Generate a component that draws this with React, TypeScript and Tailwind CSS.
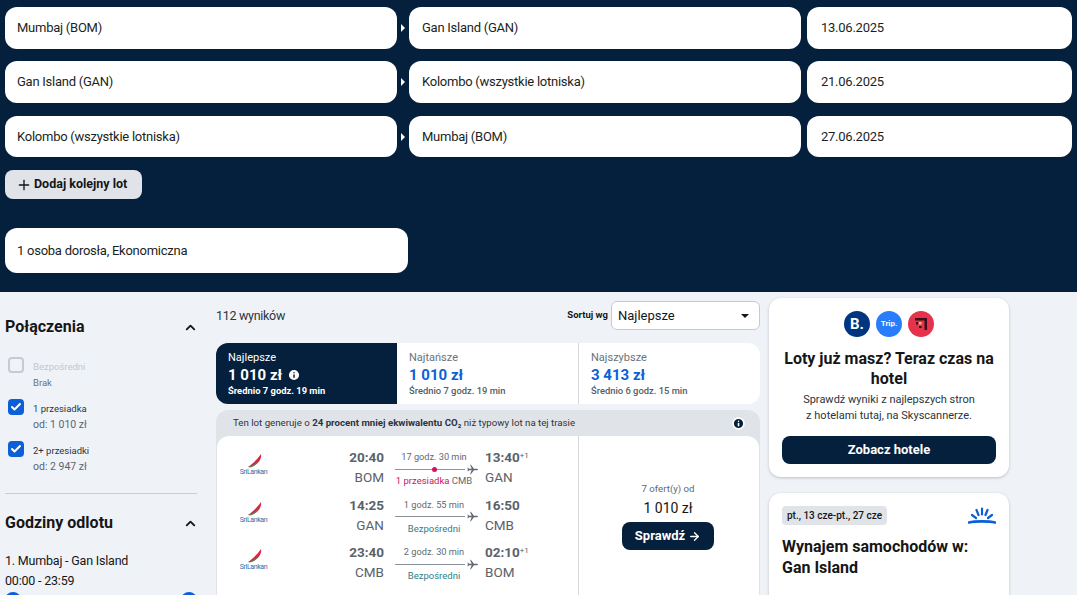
import { ChevronUp, Check, Plus, ArrowRight, Info } from "lucide-react";

const FONT = "font-['Roboto','Liberation_Sans',sans-serif]";

const legs = [
  { from: "Mumbaj (BOM)", to: "Gan Island (GAN)", date: "13.06.2025", h: "h-[42px]", mb: "mb-3" },
  { from: "Gan Island (GAN)", to: "Kolombo (wszystkie lotniska)", date: "21.06.2025", h: "h-[42px]", mb: "mb-[13px]" },
  { from: "Kolombo (wszystkie lotniska)", to: "Mumbaj (BOM)", date: "27.06.2025", h: "h-[41px]", mb: "mb-[13px]" },
];

const flights = [
  { dep: "20:40", from: "BOM", dur: "17 godz. 30 min", arr: "13:40", plus: true, to: "GAN", stop: true },
  { dep: "14:25", from: "GAN", dur: "1 godz. 55 min", arr: "16:50", plus: false, to: "CMB", stop: false },
  { dep: "23:40", from: "CMB", dur: "2 godz. 30 min", arr: "02:10", plus: true, to: "BOM", stop: false },
];

function Field({ text, className }: { text: string; className: string }) {
  return (
    <div className={`flex items-center rounded-xl bg-white text-[13px] tracking-[-0.25px] text-[#1b1f24] ${className}`}>
      {text}
    </div>
  );
}

function FilterCheck({ label, sub, checked, disabled }: { label: string; sub: string; checked?: boolean; disabled?: boolean }) {
  return (
    <div className="flex h-[42px] gap-[9px] pl-[3px]">
      <div className={`mt-[1px] flex h-4 w-4 items-center justify-center rounded-[4px] ${checked ? "bg-[#0b5fd8]" : "border-2 border-[#c6cbd2]"}`}>
        {checked && <Check size={12} strokeWidth={4} className="text-white" />}
      </div>
      <div className="pt-[4px]">
        <p className={`text-[9.500px] leading-[13px] ${disabled ? "text-[#c3c7cd]" : "text-[#2b3440]"}`}>{label}</p>
        <p className={`mt-[3px] leading-[14px] ${disabled ? "text-[9.500px] text-[#6b7280]" : "text-[10.500px] text-[#5c6570]"}`}>{sub}</p>
      </div>
    </div>
  );
}

function Plane() {
  return (
    <svg viewBox="0 0 24 24" className="h-[11px] w-[11px] shrink-0 fill-[#626971]">
      <path d="M24 12c0-.9-1-1.500-2-1.500h-6.800L8.500 1.500H6.800l3.400 9H4.500L2.500 8H1l.8 4-.8 4h1.500l2-2.500h5.700l-3.400 9h1.700l6.700-9H22c1 0 2-.6 2-1.500z" />
    </svg>
  );
}

function AirlineLogo() {
  return (
    <div className="flex w-[27px] flex-col items-center">
      <svg viewBox="0 0 24 14" className="h-[14px] w-[24px]">
        <path d="M6 13C10 10 15 6 19 0c1 5-3 11-10 13z" fill="#d9253f" />
        <path d="M6 13c4-1 8-3 11-7-2 4-5 7-9 7.500z" fill="#2f9e5f" />
      </svg>
      <span className="whitespace-nowrap text-[7px] leading-[8px] tracking-[-0.4px] text-[#2f6ba8]">SriLankan</span>
    </div>
  );
}

function FlightRow({ f }: { f: (typeof flights)[number] }) {
  return (
    <div className="flex h-[47.500px] items-start">
      <div className="ml-[23px] mt-[7px]"><AirlineLogo /></div>
      <div className="ml-[60px] w-[57px] text-right">
        <p className="text-[13.500px] font-bold leading-5 text-[#5b626a]">{f.dep}</p>
        <p className="text-[13.500px] leading-[20px] text-[#5b626a]">{f.from}</p>
      </div>
      <div className="ml-[11px] flex w-[87px] flex-col pt-[3px]">
        <p className="w-[78px] whitespace-nowrap text-center text-[9.200px] leading-[14px] text-[#626971]">{f.dur}</p>
        <div className="-mt-[1px] flex h-3 items-center gap-[2px]">
          <div className="relative h-px w-[70px] bg-[#8c939b]">
            {f.stop && <span className="absolute left-[37px] top-[-2px] h-[5px] w-[5px] rounded-full bg-[#d1135f]" />}
          </div>
          <Plane />
        </div>
        <p className="-mt-[1px] w-[78px] whitespace-nowrap text-center text-[9.500px] leading-[13px]">
          {f.stop ? (
            <>
              <span className="text-[#d1135f]">1 przesiadka</span> <span className="text-[#626971]">CMB</span>
            </>
          ) : (
            <span className="text-[#2c7f88]">Bezpośredni</span>
          )}
        </p>
      </div>
      <div className="ml-[3px]">
        <p className="text-[13.500px] font-bold leading-5 text-[#5b626a]">
          {f.arr}
          {f.plus && <sup className="text-[8px] font-normal">+1</sup>}
        </p>
        <p className="text-[13.500px] leading-[20px] text-[#5b626a]">{f.to}</p>
      </div>
    </div>
  );
}

function Tab({ title, price, avg, active, info }: { title: string; price: string; avg: string; active?: boolean; info?: boolean }) {
  return (
    <div className={`flex-1 pl-3 pt-[8px] ${active ? "rounded-l-xl bg-[#05203c] text-white" : "border-r border-[#d5d9de] bg-white last:rounded-r-xl last:border-r-0"}`}>
      <p className={`text-[11px] leading-[14px] ${active ? "" : "text-[#6b727a]"}`}>{title}</p>
      <p className={`flex items-center gap-[5px] text-[15px] font-bold leading-[20px] ${active ? "" : "text-[#0b5fd8]"}`}>
        {price}
        {info && <Info size={14} strokeWidth={2.5} className="fill-white text-[#05203c]" />}
      </p>
      <p className={`text-[9.400px] leading-[11px] ${active ? "font-bold" : "font-medium text-[#555c64]"}`}>{avg}</p>
    </div>
  );
}

export default function App() {
  return (
    <div className={`h-[595px] w-[1077px] overflow-hidden bg-[#eff3f8] ${FONT}`}>
      <header className="h-[292px] bg-[#05203c] px-[5px] pt-[7px]">
        {legs.map((l) => (
          <div key={l.date} className={`flex ${l.mb}`}>
            <Field text={l.from} className={`w-[392px] pl-3 ${l.h}`} />
            <div className="flex w-[12px] items-center justify-center">
              <span className="h-0 w-0 border-y-[4px] border-l-[4px] border-y-transparent border-l-white" />
            </div>
            <Field text={l.to} className={`w-[392px] pl-[13px] ${l.h}`} />
            <Field text={l.date} className={`ml-[6px] w-[265px] pl-[14px] tracking-[-0.4px] ${l.h}`} />
          </div>
        ))}
        <button className="flex h-[29px] w-[137px] items-center gap-[2px] rounded-lg bg-[#e0e4e9] pl-[11px] text-[12.500px] font-bold text-[#161616]">
          <Plus size={16} strokeWidth={2} />
          Dodaj kolejny lot
        </button>
        <Field text="1 osoba dorosła, Ekonomiczna" className="mt-[29px] h-[45px] w-[403px] pl-3" />
      </header>

      <main className="flex">
        <aside className="ml-[5px] w-[192px] pt-[26px] text-[#161616]">
          <div className="flex items-center justify-between">
            <h2 className="text-[16px] font-bold leading-[18px]">Połączenia</h2>
            <ChevronUp size={15} strokeWidth={3} className="-mr-[1px]" />
          </div>
          <div className="mt-[20px]">
            <FilterCheck label="Bezpośredni" sub="Brak" disabled />
            <FilterCheck label="1 przesiadka" sub="od: 1 010 zł" checked />
            <FilterCheck label="2+ przesiadki" sub="od: 2 947 zł" checked />
          </div>
          <div className="mt-[11px] h-px bg-[#c9ced5]" />
          <div className="mt-[20px] flex items-center justify-between">
            <h2 className="text-[16px] font-bold leading-[18px]">Godziny odlotu</h2>
            <ChevronUp size={15} strokeWidth={3} className="-mr-[1px]" />
          </div>
          <p className="mt-[19px] text-[12.500px] leading-[20px] tracking-[-0.2px]">1. Mumbaj - Gan Island</p>
          <p className="text-[12.500px] leading-[20px] tracking-[-0.2px]">00:00 - 23:59</p>
          <div className="mt-[1px] flex justify-between">
            <span className="h-4 w-4 rounded-full bg-[#0b5fd8]" />
            <span className="h-4 w-4 rounded-full bg-[#0b5fd8]" />
          </div>
        </aside>

        <section className="ml-[19px] w-[544px] pt-[9px]">
          <div className="flex h-[29px] items-center justify-between">
            <p className="pt-[1px] text-[12.500px] tracking-[-0.3px] text-[#2b3440]">112 wyników</p>
            <div className="flex items-center gap-[3px]">
              <span className="text-[9.500px] font-bold text-[#161616]">Sortuj wg</span>
              <div className="flex h-[29px] w-[149px] items-center justify-between rounded-md border border-[#c6cbd2] bg-white px-[6px] text-[13px] text-[#161616]">
                Najlepsze
                <span className="mr-[4px] h-0 w-0 border-x-[4px] border-t-[4px] border-x-transparent border-t-[#161616]" />
              </div>
            </div>
          </div>
          <div className="mt-[13px] flex h-[61px]">
            <Tab title="Najlepsze" price="1 010 zł" avg="Średnio 7 godz. 19 min" active info />
            <Tab title="Najtańsze" price="1 010 zł" avg="Średnio 7 godz. 19 min" />
            <Tab title="Najszybsze" price="3 413 zł" avg="Średnio 6 godz. 15 min" />
          </div>
          <div className="mt-[6px] rounded-t-xl bg-[#e0e4e9] p-px pb-0">
            <div className="flex h-[25px] items-center justify-between pl-[16px] pr-[14px] text-[9.700px] text-[#2b3440]">
              <p>
                Ten lot generuje o <b>24 procent mniej ekwiwalentu CO₂</b> niż typowy lot na tej trasie
              </p>
              <Info size={13} strokeWidth={3} className="fill-[#05203c] text-white" />
            </div>
            <div className="flex h-[170px] rounded-xl bg-white">
              <div className="w-[361px] pt-[11px]">
                {flights.map((f) => <FlightRow key={f.dep} f={f} />)}
              </div>
              <div className="flex flex-1 flex-col items-center border-l border-[#d5d9de] pr-[2px] pt-[46px]">
                <p className="text-[9.700px] leading-[14px] text-[#626971]">7 ofert(y) od</p>
                <p className="mt-[2px] text-[14px] leading-[20px] text-[#161616]">1 010 zł</p>
                <button className="mt-[4px] flex h-[28px] w-[92px] items-center justify-center gap-[3px] rounded-lg bg-[#05203c] text-[13px] font-bold text-white">
                  Sprawdź <ArrowRight size={13} strokeWidth={2.5} />
                </button>
              </div>
            </div>
          </div>
        </section>

        <aside className="ml-[9px] w-[240px] pt-[6px]">
          <div className="flex h-[179px] flex-col items-center rounded-xl bg-white px-[13px] pt-[13px] shadow-[0_1px_3px_rgba(37,32,31,0.25)]">
            <div className="flex gap-[6px]">
              <span className="flex h-[26px] w-[26px] items-center justify-center rounded-full bg-[#003580] text-[15px] font-bold text-white">B.</span>
              <span className="flex h-[26px] w-[26px] items-center justify-center rounded-full bg-[#287dfa] text-[8px] font-bold text-white">Trip.</span>
              <span className="flex h-[26px] w-[26px] items-center justify-center rounded-full bg-[#e5334b]">
                <svg viewBox="0 0 16 16" className="h-4 w-4">
                  <path d="M2 2h12v12h-2.500V4.500H2z" fill="#3a0d1e" />
                  <rect x="6" y="6" width="2.500" height="2.500" fill="#f7c948" />
                  <rect x="3" y="6" width="2" height="2.500" fill="#3a0d1e" />
                  <rect x="6" y="10" width="2.500" height="2" fill="#3a0d1e" />
                </svg>
              </span>
            </div>
            <h3 className="mt-[12px] text-center text-[16px] font-bold leading-[20px] text-[#161616]">
              Loty już masz? Teraz czas na hotel
            </h3>
            <p className="mt-[3px] text-center text-[11px] leading-[16px] text-[#2b3440]">
              Sprawdź wyniki z najlepszych stron
              <br />z hotelami tutaj, na Skyscannerze.
            </p>
            <button className="mt-[12px] h-[28px] w-full rounded-lg bg-[#05203c] text-[13px] font-bold text-white">
              Zobacz hotele
            </button>
          </div>
          <div className="mt-[16px] rounded-xl bg-white px-[13px] pt-[13px] shadow-[0_1px_3px_rgba(37,32,31,0.25)]">
            <div className="flex items-center justify-between">
              <span className="flex h-[19px] w-[105px] items-center justify-center rounded bg-[#e0e4e9] text-[10px] font-medium text-[#161616]">
                pt., 13 cze-pt., 27 cze
              </span>
              <svg viewBox="0 0 28 18" className="h-[18px] w-[28px] stroke-[#0b5fd8]" strokeWidth="2.200" fill="none" strokeLinecap="round">
                <path d="M14 1.500v6M8.500 3l2 5M19.500 3l-2 5M4 8l4 3M24 8l-4 3" />
                <path d="M1 15.500c6-1.500 20-1.500 26 0" strokeWidth="2.600" />
              </svg>
            </div>
            <h3 className="mt-[11px] text-[16px] font-bold leading-[21px] text-[#161616]">
              Wynajem samochodów w:
              <br />
              Gan Island
            </h3>
            <p className="mt-[14px] whitespace-nowrap text-[11px] leading-[16px] text-[#2b3440]">Niezależnie od tego, dokąd jedziesz, znajdź auto</p>
          </div>
        </aside>
      </main>
    </div>
  );
}
